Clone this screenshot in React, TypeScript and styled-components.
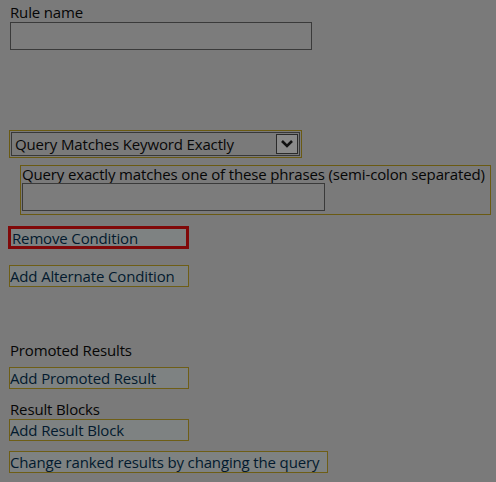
import React from "react";
import styled, { createGlobalStyle } from "styled-components";

const Global = createGlobalStyle`
  html, body { margin: 0; padding: 0; background: #7a7a7a; }
  body { font-family: "Open Sans", "Noto Sans", sans-serif; color: #080808; }
`;

const Page = styled.div`
  width: 496px;
  height: 482px;
  box-sizing: border-box;
  padding: 2px 0 0 10px;
  display: flex;
  flex-direction: column;
  align-items: flex-start;
  background: #7a7a7a;
  font-size: 15px;
  letter-spacing: -0.15px;
`;

const Label = styled.div<{ $mt?: number }>`
  line-height: 20px;
  margin-top: ${(p) => p.$mt ?? 0}px;
  color: #060606;
`;

const TextBox = styled.div<{ $w: number }>`
  width: ${(p) => p.$w}px;
  height: 28px;
  box-sizing: border-box;
  border: 1px solid #3a3a3a;
  background: #7c7c7c;
`;

const Frame = styled.div<{ $ml?: number; $mt?: number }>`
  box-sizing: border-box;
  border: 1px solid #6a5a12;
  margin-left: ${(p) => p.$ml ?? 0}px;
  margin-top: ${(p) => p.$mt ?? 0}px;
`;

const SelectFrame = styled(Frame)`
  width: 293px;
  height: 28px;
  padding: 1px;
  margin-left: -1px;
`;

const Select = styled.div`
  height: 24px;
  box-sizing: border-box;
  border: 1px solid #383838;
  display: flex;
  align-items: center;
  justify-content: space-between;
  padding: 0 0 0 3px;
`;

const Chevron = styled.div`
  width: 22px;
  height: 20px;
  box-sizing: border-box;
  border: 1px solid #2a2a2a;
  background: #8a8a8a;
  margin-right: 1px;
  display: flex;
  align-items: center;
  justify-content: center;
`;

const PhraseFrame = styled(Frame)`
  width: 471px;
  height: 50px;
  padding: 0 0 0 1px;
  display: flex;
  flex-direction: column;
  align-items: flex-start;
`;

const PhraseLabel = styled.div`
  line-height: 17px;
  color: #060606;
  white-space: nowrap;
`;

const LinkBox = styled.div<{ $w: number; $mt: number; $red?: boolean }>`
  box-sizing: border-box;
  width: ${(p) => p.$w}px;
  height: ${(p) => (p.$red ? 23 : 22)}px;
  margin-left: ${(p) => (p.$red ? -2 : -1)}px;
  margin-top: ${(p) => p.$mt}px;
  border: ${(p) => (p.$red ? "3px solid #800808" : "1px solid #6e5e16")};
  background: #7e8282;
  color: #031a2e;
  display: flex;
  align-items: center;
  padding-left: ${(p) => (p.$red ? 1 : 0)}px;
  white-space: nowrap;
  line-height: 18px;
`;

export default function App() {
  return (
    <>
      <Global />
      <Page>
        <Label>Rule name</Label>
        <TextBox $w={302} />
        <SelectFrame $mt={80}>
          <Select>
            <span>Query Matches Keyword Exactly</span>
            <Chevron>
              <svg width="14" height="10" viewBox="0 0 14 10">
                <path d="M2 2 L7 7 L12 2" fill="none" stroke="#111" strokeWidth="2.6" />
              </svg>
            </Chevron>
          </Select>
        </SelectFrame>
        <PhraseFrame $ml={10} $mt={7}>
          <PhraseLabel>Query exactly matches one of these phrases (semi-colon separated)</PhraseLabel>
          <TextBox $w={303} />
        </PhraseFrame>
        <LinkBox $red $w={181} $mt={11}>Remove Condition</LinkBox>
        <LinkBox $w={180} $mt={16}>Add Alternate Condition</LinkBox>
        <Label $mt={53}>Promoted Results</Label>
        <LinkBox $w={180} $mt={7}>Add Promoted Result</LinkBox>
        <Label $mt={10}>Result Blocks</Label>
        <LinkBox $w={180} $mt={0}>Add Result Block</LinkBox>
        <LinkBox $w={319} $mt={10}>Change ranked results by changing the query</LinkBox>
      </Page>
    </>
  );
}
